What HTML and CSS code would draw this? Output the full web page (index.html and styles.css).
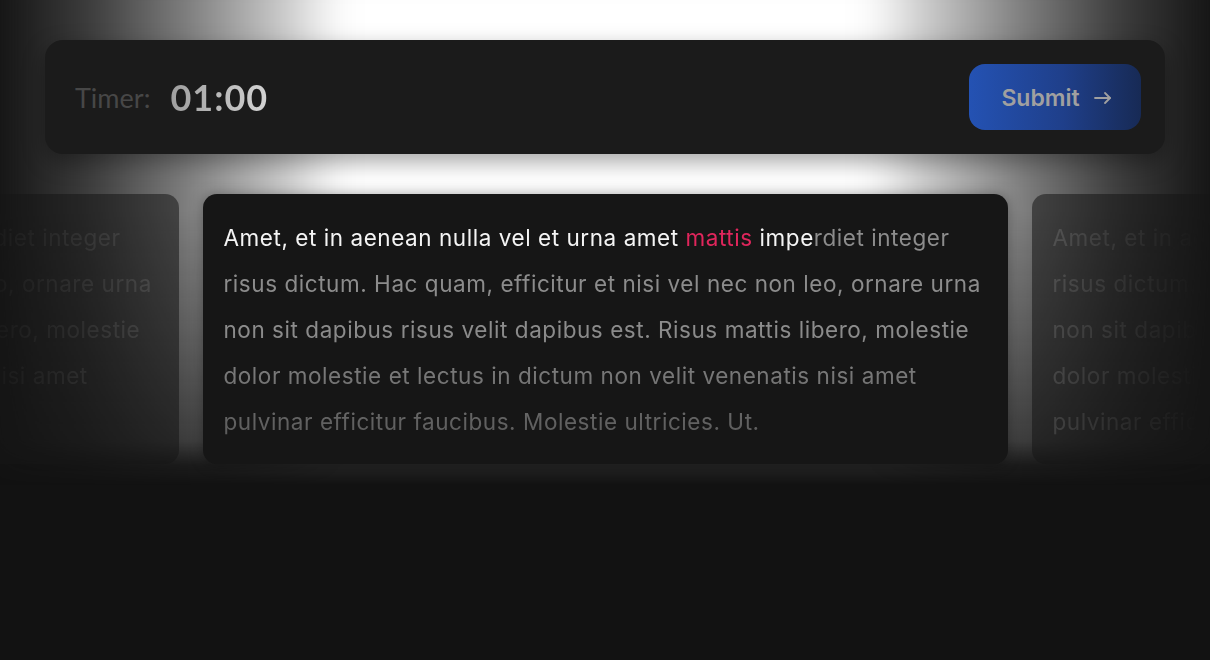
FILE: index.html
```html
<!DOCTYPE html>
<html lang="en">
<head>
    <meta charset="UTF-8">
    <meta name="viewport" content="width=device-width, initial-scale=1.0">
    <title>Typing Test</title>
    <link rel="stylesheet" href="styles.css">
</head>
<body>
    <div class="glow"></div>

    <header class="bar">
        <div class="timer">
            <span class="timer-label">Timer:</span>
            <span class="timer-value">01:00</span>
        </div>
        <button class="submit">
            Submit
            <svg width="20" height="20" viewBox="0 0 20 20" fill="none" stroke="currentColor" stroke-width="1.8" stroke-linecap="round" stroke-linejoin="round">
                <path d="M2 10h15"/>
                <path d="M12 5l5 5-5 5"/>
            </svg>
        </button>
    </header>

    <section class="track">
        <article class="card card-side card-prev">
            <p class="passage">Amet, et in aenean nulla vel et urna amet mattis imperdiet integer risus dictum. Hac quam, efficitur et nisi vel nec non leo, ornare urna non sit dapibus risus velit dapibus est. Risus mattis libero, molestie dolor molestie et lectus in dictum non velit venenatis nisi amet pulvinar efficitur faucibus. Molestie ultricies. Ut.</p>
        </article>

        <article class="card card-current">
            <p class="passage"><span class="typed">Amet, et in aenean nulla vel et urna amet </span><span class="typed wrong">mattis</span><span class="typed"> impe</span>rdiet integer risus dictum. Hac quam, efficitur et nisi vel nec non leo, ornare urna non sit dapibus risus velit dapibus est. Risus mattis libero, molestie dolor molestie et lectus in dictum non velit venenatis nisi amet pulvinar efficitur faucibus. Molestie ultricies. Ut.</p>
        </article>

        <article class="card card-side card-next">
            <p class="passage">Amet, et in aenean nulla vel et urna amet mattis imperdiet integer risus dictum. Hac quam, efficitur et nisi vel nec non leo, ornare urna non sit dapibus risus velit dapibus est. Risus mattis libero, molestie dolor molestie et lectus in dictum non velit venenatis nisi amet pulvinar efficitur faucibus. Molestie ultricies. Ut.</p>
        </article>
    </section>
</body>
</html>
```

FILE: styles.css
```css
html, body {
    height: 100%;
}
body {
    margin: 0;
    background: #121212;
    font-family: Inter, 'Noto Sans', sans-serif;
    color: #8c8c8c;
    position: relative;
    overflow: hidden;
}

/* white light behind the header and the cards */
.glow {
    position: absolute;
    left: 0;
    top: -40px;
    width: 100%;
    height: 560px;
    z-index: 0;
    filter: blur(18px);
    background: linear-gradient(90deg, #161616 0, #3c3c3c 90px, #808080 190px, #cfcfcf 290px, #fff 340px, #fff 870px, #cfcfcf 920px, #808080 1020px, #3c3c3c 1120px, #161616 1210px);
    -webkit-mask-image: linear-gradient(180deg, #000 0, #000 250px, rgba(0,0,0,0.7) 370px, rgba(0,0,0,0.4) 480px, rgba(0,0,0,0.08) 505px, transparent 525px);
    mask-image: linear-gradient(180deg, #000 0, #000 250px, rgba(0,0,0,0.7) 370px, rgba(0,0,0,0.4) 480px, rgba(0,0,0,0.08) 505px, transparent 525px);
}

.bar {
    position: relative;
    z-index: 2;
    height: 114px;
    margin: 40px 45px 0;
    padding: 0 24px 0 30px;
    box-sizing: border-box;
    display: flex;
    align-items: center;
    justify-content: space-between;
    background: #1b1b1b;
    border-radius: 18px;
    box-shadow: 0 8px 22px rgba(0,0,0,0.35);
}
.timer {
    display: flex;
    align-items: center;
    gap: 20px;
    font-family: Lato, sans-serif;
}
.timer-label {
    font-size: 27px;
    color: #474747;
}
.timer-value {
    font-size: 36px;
    font-weight: 700;
    letter-spacing: 1px;
    background: linear-gradient(90deg, #9e9e9e, #d4d4d4);
    -webkit-background-clip: text;
    background-clip: text;
    color: transparent;
}
.submit {
    width: 172px;
    height: 66px;
    display: flex;
    align-items: center;
    justify-content: center;
    gap: 13px;
    border: none;
    border-radius: 16px;
    background: linear-gradient(90deg, #2452b3 0%, #1f3f8a 55%, #172a55 100%);
    color: #a0a0a0;
    font-family: Inter, sans-serif;
    font-size: 23px;
    font-weight: 600;
    padding: 2px 0 0 4px;
}

.track {
    position: relative;
    z-index: 1;
    display: flex;
    justify-content: center;
    gap: 24px;
    margin-top: 40px;
}
.card {
    flex: 0 0 805px;
    height: 270px;
    box-sizing: border-box;
    padding: 21px 21px 19px;
    border-radius: 14px;
}
.card-current {
    position: relative;
    z-index: 2;
    background: #161616;
    box-shadow: 0 0 14px rgba(0,0,0,0.35);
}
.card-side {
    background: rgba(22,22,22,0.55);
    color: rgba(255,255,255,0.13);
}
.card-prev .passage {
    -webkit-mask-image: linear-gradient(90deg, transparent 560px, #000 805px);
    mask-image: linear-gradient(90deg, transparent 560px, #000 805px);
}
.card-next .passage {
    -webkit-mask-image: linear-gradient(90deg, #000 0, transparent 150px);
    mask-image: linear-gradient(90deg, #000 0, transparent 150px);
}

.passage {
    margin: 0;
    font-size: 22.5px;
    line-height: 46px;
    letter-spacing: 0.55px;
}
.card-current .passage {
    -webkit-mask-image: linear-gradient(180deg, #000 50%, rgba(0,0,0,0.55) 100%);
    mask-image: linear-gradient(180deg, #000 50%, rgba(0,0,0,0.55) 100%);
}
.typed {
    color: #f4f4f4;
}
.typed.wrong {
    color: #e0265c;
}
```
